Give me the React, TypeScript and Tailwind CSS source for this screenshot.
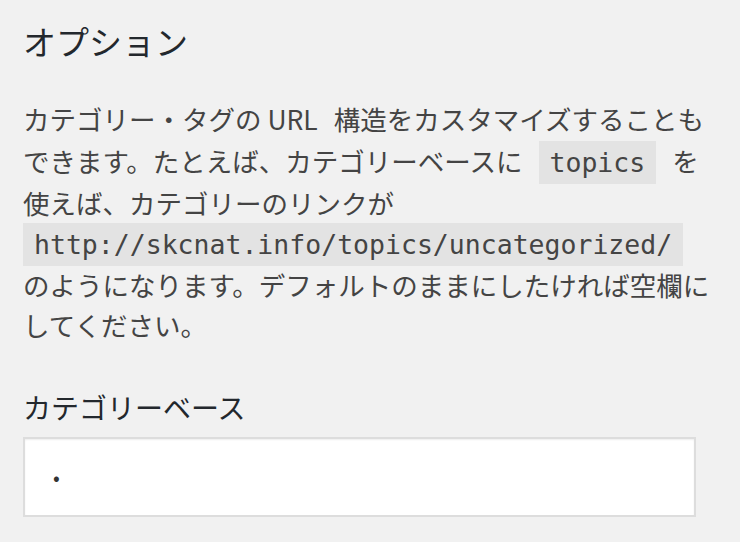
const jp = { fontFamily: '"Noto Sans CJK JP", "Noto Sans", sans-serif' }

const Code = ({ children }: { children: string }) => (
  <code className="bg-[#e3e3e3] px-[11px] py-[6px] font-['DejaVu_Sans_Mono',monospace] text-[26.5px] text-[#444]">
    {children}
  </code>
)

// wider gap, like the half-width space of the original font
const Gap = () => <span className="font-['DejaVu_Sans_Mono',monospace]"> </span>

export default function App() {
  return (
    <div className="min-h-screen bg-[#f1f1f1] px-[23px] pt-[17px]" style={jp}>
      <h2 className="text-[33px] leading-[48px] text-[#23282d]">オプション</h2>

      <p className="mt-[34px] text-[26.5px] leading-[40px] text-[#444] whitespace-nowrap">
        カテゴリー・タグの URL<Gap />構造をカスタマイズすることも
        <br />
        できます。たとえば、カテゴリーベースに<Gap />
        <Code>topics</Code>
        <Gap />を
        <br />
        使えば、カテゴリーのリンクが
        <br />
        <Code>http://skcnat.info/topics/uncategorized/</Code>
        <br />
        のようになります。デフォルトのままにしたければ空欄に
        <br />
        してください。
      </p>

      <label className="mt-[42px] block text-[28px] leading-[40px] text-[#23282d]">
        カテゴリーベース
      </label>

      <div className="mt-[10px] flex h-[80px] w-[673px] items-center border-2 border-[#dddddd] bg-white px-[28px] shadow-[inset_0_1px_2px_rgba(0,0,0,0.07)]">
        <span className="text-[20px] text-[#333]">•</span>
      </div>
    </div>
  )
}
